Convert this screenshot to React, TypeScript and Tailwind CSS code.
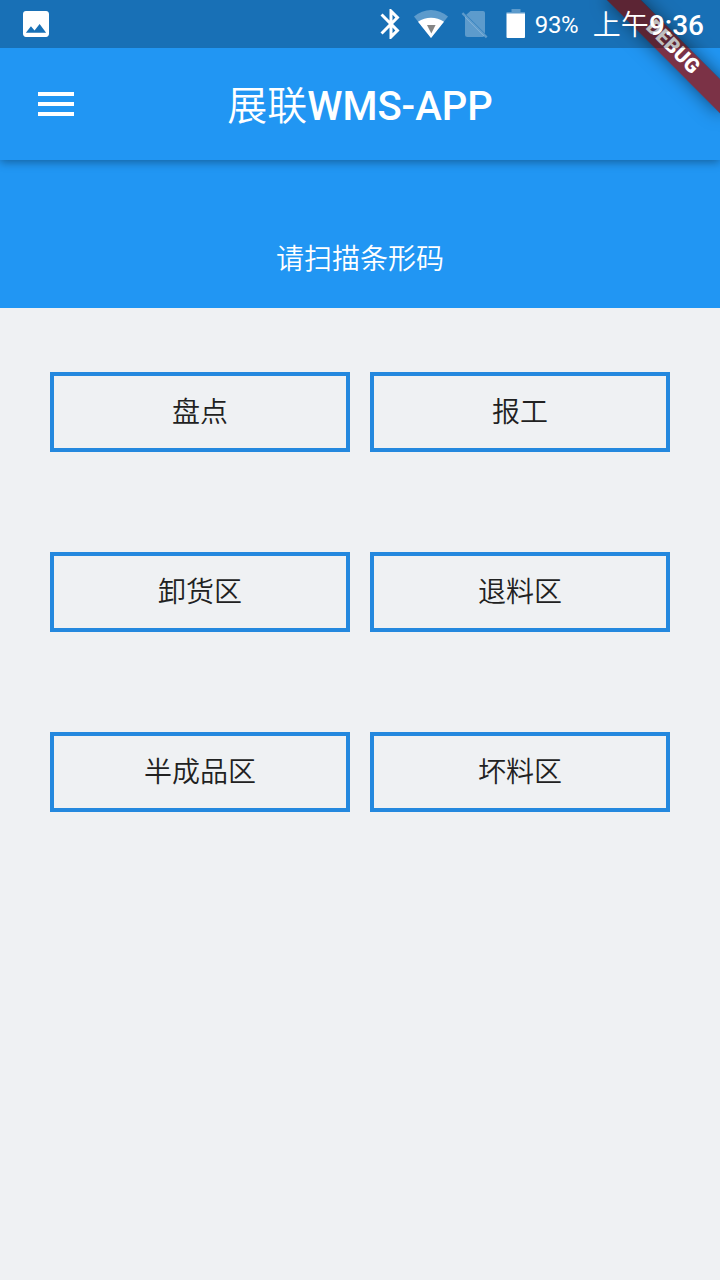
const actions = ["盘点", "报工", "卸货区", "退料区", "半成品区", "坏料区"];

const StatusBar = () => (
  <div className="relative z-20 flex h-12 items-center bg-black/25 text-white">
    <svg viewBox="3 3 18 18" className="ml-[23px] h-[26px] w-[26px]" fill="currentColor">
      <path d="M21 19V5c0-1.1-.9-2-2-2H5c-1.1 0-2 .9-2 2v14c0 1.1.9 2 2 2h14c1.1 0 2-.9 2-2zM8.500 13.500l2.500 3.010L14.500 12l4.500 6H5l3.500-4.500z" />
    </svg>

    <div className="ml-auto flex h-12 items-center">
      {/* Bluetooth */}
      <svg viewBox="0 0 24 24" className="h-9 w-9" fill="currentColor">
        <path d="M17.71 7.71L12 2h-1v7.590L6.410 5 5 6.410 10.590 12 5 17.590 6.410 19 11 14.410V22h1l5.710-5.710-4.300-4.290 4.300-4.290zM13 5.830l1.880 1.880L13 9.590V5.830zm1.880 10.460L13 18.170v-3.760l1.880 1.880z" />
      </svg>

      {/* Wifi */}
      <svg viewBox="0 0 36 30" className="ml-1 h-[30px] w-9" fill="currentColor">
        <path fillOpacity=".3" d="M18 29L1 7.500C6 3.300 12 1 18 1s12 2.300 17 6.500z" />
        <path d="M18 29L5 12.800C9 10 13.300 8.800 18 8.800s9 1.200 13 4z" />
        <path fill="#858585" d="M14 16h8.600L18.300 24.500z" />
      </svg>

      {/* No sim */}
      <svg viewBox="0 0 28 30" className="ml-[11px] h-[30px] w-7" fill="currentColor" fillOpacity=".3">
        <path d="M10.500 2H23a2 2 0 0 1 2 2V24.500L6.200 5.800zM5 7.500L24.200 26.700A2 2 0 0 1 23 28H7.500A2.500 2.500 0 0 1 5 25.500z" />
        <path d="M3.200 3.300L1.600 4.900 25.900 29.200 27.500 27.600z" />
      </svg>

      {/* Battery */}
      <svg viewBox="0 0 20 30" className="ml-[18px] h-[30px] w-5" fill="currentColor">
        <path fillOpacity=".3" d="M5.500 0h9v3H19v2H.5V3h5z" />
        <path d="M.5 4.500H19V28a1 1 0 0 1-1 1H1.500a1 1 0 0 1-1-1z" />
      </svg>

      <span className="ml-[9px] w-11 pt-0.5 text-2xl leading-none tracking-[-0.4px]">93%</span>
      <span className="ml-[14px] mr-4 whitespace-nowrap pt-1 text-[28px] font-medium leading-none">
        <span className="font-[350]">上午</span>9:36
      </span>
    </div>
  </div>
);

const DebugBanner = () => (
  <div className="pointer-events-none absolute right-0 top-0 z-10 h-40 w-40 overflow-hidden">
    <div className="absolute left-[80px] top-[56px] h-6 w-40 origin-[80px_-56px] rotate-45 bg-black/42 shadow-[0_0_18px_rgba(0,0,0,0.5)]">
      <div className="flex h-6 items-center justify-center bg-[#b71c1c]/63 pb-[3px] text-[20.4px] font-black leading-none tracking-[0.2px] text-white">
        DEBUG
      </div>
    </div>
  </div>
);

export default function App() {
  return (
    <div className="relative min-h-screen overflow-hidden bg-[#eff1f3] font-['Roboto','Noto_Sans_CJK_SC',sans-serif]">
      <header className="relative bg-[#2196f3] shadow-[0_2px_9px_rgba(0,0,0,0.36)]">
        <StatusBar />
        <div className="relative flex h-28 items-center justify-center text-white">
          <button className="absolute left-[38px] top-11" aria-label="menu">
            <svg viewBox="0 0 36 24" className="h-6 w-9" fill="currentColor">
              <path d="M0 0h36v4H0zM0 10h36v4H0zM0 20h36v4H0z" />
            </svg>
          </button>
          <h1 className="pt-1.5 text-[40px] font-medium leading-none">
            <span className="font-[350]">展联</span>WMS-APP
          </h1>
        </div>
        <DebugBanner />
      </header>

      <div className="flex h-[148px] items-end justify-center bg-[#2196f3] pb-[30px] text-[28px] font-[350] leading-9 text-white">
        请扫描条形码
      </div>

      <main className="grid grid-cols-2 gap-x-5 gap-y-[100px] px-[50px] pt-16">
        {actions.map((label) => (
          <button
            key={label}
            className="flex h-20 items-center justify-center border-4 border-[#2488de] pt-0.5 text-[28px] font-[350] leading-none text-[#212121]"
          >
            {label}
          </button>
        ))}
      </main>
    </div>
  );
}
